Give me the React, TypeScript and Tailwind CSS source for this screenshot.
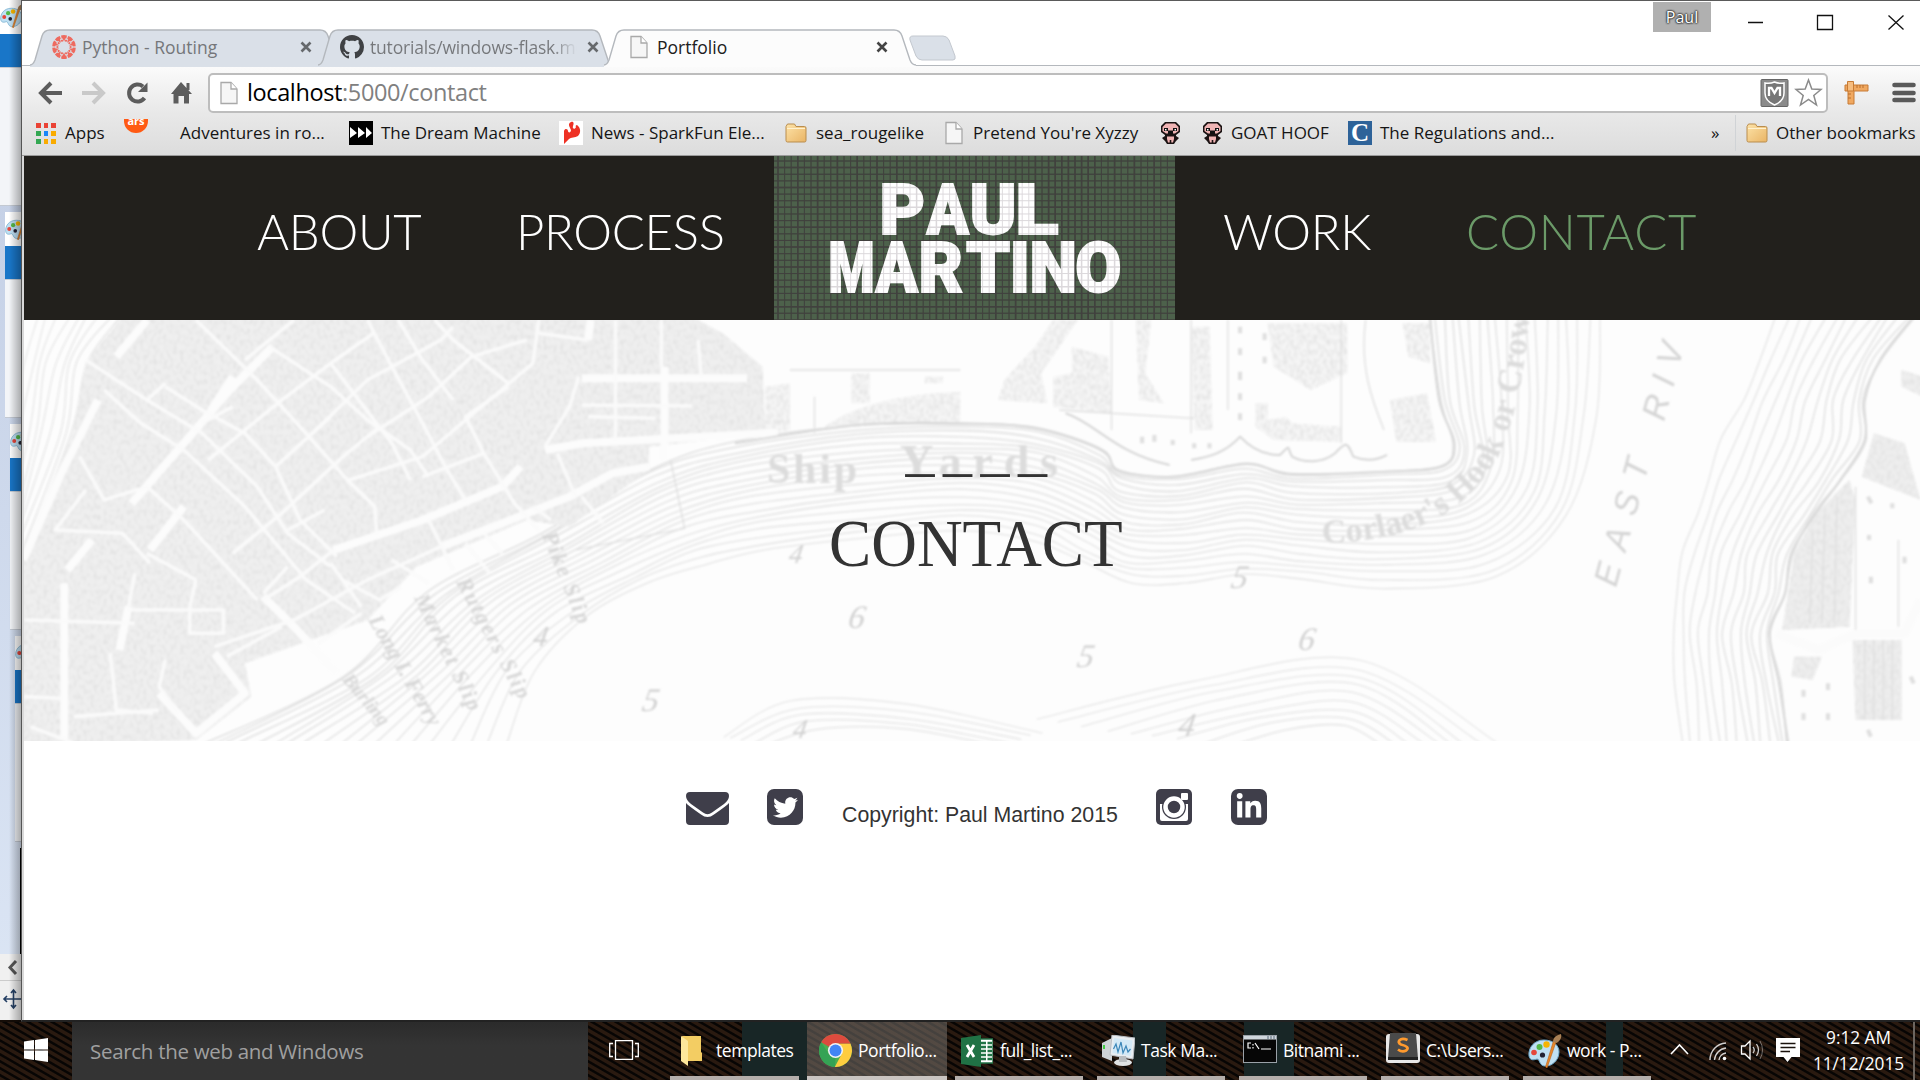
import type { ReactNode } from "react";
import { FaTwitter, FaLinkedinIn } from "react-icons/fa";

type Pt = [number, number];

const smooth = (pts: Pt[]) => {
  let d = `M${pts[0][0].toFixed(1)} ${pts[0][1].toFixed(1)}`;
  for (let i = 0; i < pts.length - 1; i++) {
    const p0 = pts[Math.max(0, i - 1)];
    const p1 = pts[i];
    const p2 = pts[i + 1];
    const p3 = pts[Math.min(pts.length - 1, i + 2)];
    d += `C${(p1[0] + (p2[0] - p0[0]) / 6).toFixed(1)} ${(p1[1] + (p2[1] - p0[1]) / 6).toFixed(1)} ${(p2[0] - (p3[0] - p1[0]) / 6).toFixed(1)} ${(p2[1] - (p3[1] - p1[1]) / 6).toFixed(1)} ${p2[0].toFixed(1)} ${p2[1].toFixed(1)}`;
  }
  return d;
};

/** Depth contours between two shore curves with the same number of points. */
function Contours({ a, b, n, ease = 1, color = "#e2e2e2" }: { a: Pt[]; b: Pt[]; n: number; ease?: number; color?: string }) {
  return (
    <g fill="none" stroke={color} strokeWidth="1.3">
      {Array.from({ length: n }, (_, i) => {
        const t = Math.pow(i / (n - 1), ease);
        const pts = a.map((p, j): Pt => [
          p[0] + (b[j][0] - p[0]) * t + Math.sin(i * 1.7 + j * 2.3) * 3,
          p[1] + (b[j][1] - p[1]) * t + Math.cos(i * 1.3 + j * 1.9) * 4,
        ]);
        return <path key={i} d={smooth(pts)} vectorEffect="non-scaling-stroke" opacity={1 - t * 0.3} />;
      })}
    </g>
  );
}

const yardIn: Pt[] = [[330, 1330], [560, 1130], [700, 880], [880, 700], [1060, 510], [1200, 430], [1400, 375], [1568, 370], [1690, 385], [1798, 450], [1828, 512], [1920, 530], [2035, 492], [2110, 522], [2260, 515], [2355, 500], [2375, 430], [2350, 300], [2335, 50]];
const yardOut: Pt[] = [[830, 1330], [870, 1110], [960, 950], [1060, 850], [1150, 790], [1250, 750], [1400, 720], [1568, 690], [1690, 720], [1768, 790], [1850, 850], [1940, 845], [2030, 825], [2130, 840], [2260, 862], [2440, 830], [2560, 650], [2605, 350], [2612, 50]];
const eastIn: Pt[] = [[3125, 50], [3070, 180], [3045, 300], [3045, 420], [3005, 540], [2965, 640], [2925, 760], [2915, 880], [2890, 1000], [2905, 1150], [2920, 1330]];
const eastOut: Pt[] = [[2900, 50], [2875, 180], [2845, 300], [2812, 420], [2790, 540], [2770, 640], [2750, 760], [2737, 880], [2732, 1000], [2737, 1150], [2745, 1330]];
const shoalIn: Pt[] = [[2000, 1340], [2100, 1290], [2200, 1280], [2260, 1340]];
const shoalOut: Pt[] = [[1690, 1260], [1950, 1140], [2220, 1080], [2440, 1330]];
const westIn: Pt[] = [[195, 50], [140, 190], [120, 400], [38, 760]];
const westOut: Pt[] = [[60, 50], [40, 190], [20, 400], [0, 700]];
const smallIn: Pt[] = [[1240, 1340], [1330, 1290], [1480, 1290], [1640, 1340]];
const smallOut: Pt[] = [[1180, 1310], [1290, 1200], [1480, 1215], [1700, 1300]];

const wideStreets = [
  "M445 140L370 280L300 430L215 610M380 230L345 330",
  "M160 300L100 520L38 780",
  "M850 500L820 560L690 660L545 750M110 810L150 720",
  "M1060 500L1000 520L930 590L820 670L720 740",
  "M105 850L105 1320M210 920L195 1050",
  "M240 60L190 170M430 890L480 980L550 1120",
  "M350 1060L400 1180L320 1300L260 1180",
  "M1085 200L1085 480M950 235L1220 235M890 450L950 430L1270 398",
  "M965 60L960 120M300 620L245 750",
];
const narrowStreets = [
  "M140 180L240 300L330 400L420 560L470 700L540 800",
  "M170 270L230 370L300 450L400 620L500 840L580 940",
  "M270 260L330 330L400 400L450 500L490 660L550 770",
  "M320 60L420 240L480 360L570 545L612 620L615 700",
  "M440 140L540 260L600 360L670 450L700 530",
  "M600 60L640 200L690 370L730 510L760 600",
  "M650 60L690 180L740 300M710 60L740 120L830 250",
  "M740 80L720 120L600 240L510 400",
  "M880 60L870 190L780 330L690 470L570 540",
  "M610 100L540 190L460 300L340 480",
  "M480 60L400 180M860 120L770 170L700 290L600 410",
  "M830 260L760 350L790 460L840 610L880 690",
  "M240 300L270 250M330 370L380 320M450 500L540 350",
  "M540 190L640 430L670 540M690 530L790 460",
  "M700 660L740 810M760 730L800 820M790 700L820 760M640 780L700 850",
  "M910 460L940 590M950 590L985 670M870 620L900 660",
  "M1005 60L1005 420M1080 60V200M1140 120L1145 230M950 315L1130 318M960 350L1070 355M945 230L930 320L890 440",
  "M130 470L170 600L240 560L300 660L370 800L420 900",
  "M40 960L220 970M210 930L365 930L365 1000L310 1000L310 920",
  "M270 1080L260 1160L290 1240M240 760L320 840M470 690L530 630M545 750L490 830L430 900",
  "M720 740L600 840L480 960L350 1040",
  "M540 790L590 920M560 840L620 900L655 860M470 800L430 880M880 100L960 120",
  "M620 380L560 470L460 640L380 760M140 570L90 690L200 700L245 790",
  "M40 1190L100 1195M120 1250L260 1230M180 1060L190 1230L250 1240M50 1280L120 1330",
  "M220 820L210 920M320 840L310 920M370 1070L460 980M520 1030L590 940",
];

function SoundingMap() {
  return (
    <svg className="absolute inset-0 h-full w-full overflow-hidden" viewBox="0 0 1896 421" preserveAspectRatio="none" aria-hidden="true">
      <defs>
        <filter id="grain" x="0" y="0" width="100%" height="100%">
          <feTurbulence type="fractalNoise" baseFrequency="0.3 0.2" numOctaves="2" seed="7" result="n" />
          <feColorMatrix in="n" type="matrix" values="0 0 0 0 0.76  0 0 0 0 0.76  0 0 0 0 0.76  2.4 0 0 0 -0.95" result="g" />
          <feComposite in="g" in2="SourceGraphic" operator="in" result="c" />
          <feMerge>
            <feMergeNode in="SourceGraphic" />
            <feMergeNode in="c" />
          </feMerge>
        </filter>
        <filter id="soft">
          <feGaussianBlur stdDeviation="0.8" />
        </filter>
        <path id="hook" d="M1298 223C1385 222 1445 195 1477 130C1494 88 1505 40 1508 -60" />
      </defs>
      <rect width="1896" height="421" fill="#fdfdfd" />
      <g filter="url(#soft)">
        <g transform="translate(-24 -20) scale(0.6124 0.3333)">
          <Contours a={yardIn} b={yardOut} n={19} ease={1.15} color="#dcdcdc" />
          <Contours a={eastIn} b={eastOut} n={14} ease={1.2} color="#dadada" />
          <Contours a={shoalIn} b={shoalOut} n={9} />
          <Contours a={smallIn} b={smallOut} n={5} />
          <Contours a={westIn} b={westOut} n={9} />
        </g>
        <g filter="url(#grain)">
          <g transform="translate(-24 -20) scale(0.6124 0.3333)">
            <path d="M200 50L140 185L120 400L36 760L36 1340L320 1320L410 1190L400 1090L600 960L680 800L860 660L930 680L1060 510L1060 440L1250 400L1245 200L1180 100L1130 50Z" fill="#f0f0f0" />
            <path d="M1250 260L1290 250L1290 390L1250 400ZM1390 220L1420 220L1420 310L1390 310ZM1510 230L1540 230L1540 250L1510 250ZM1640 240L1690 140L1720 60L1760 60L1730 140L1700 220L1710 310L1630 300ZM1720 230L1750 220L1750 140L1810 170L1815 340L1720 320ZM1855 60L1880 60L1870 220L1900 310L1860 300ZM1945 80L1975 80L1980 390L1950 390ZM2070 70L2200 70L2200 220L2140 270L2080 200ZM2050 310L2070 310L2070 360L2100 350L2110 370L2190 380L2190 425L2080 420L2050 380ZM2270 300L2330 280L2345 425L2280 425ZM2290 70L2335 70L2335 190L2300 170Z" fill="#f5f5f5" />
            <path d="M3020 540L3030 600L3020 980L2910 990L2930 760L2965 640ZM3060 400L3110 430L3136 600L3040 530ZM3025 1020L3105 1020L3105 1260L3030 1260ZM3105 210L3140 230L3140 290L3105 260ZM2930 1070L2975 1070L2960 1140L2925 1130Z" fill="#eeeeee" />
            <path d="M1340 390C1400 300 1500 280 1568 275L1568 370C1480 360 1400 380 1340 390Z" fill="#f5f5f5" />
          </g>
        </g>
        <g transform="translate(-24 -20) scale(0.6124 0.3333)" fill="none" strokeLinejoin="round">
          <g stroke="#fcfcfc" strokeWidth="8">
            {wideStreets.map((d) => <path key={d} d={d} vectorEffect="non-scaling-stroke" />)}
          </g>
          <g stroke="#fafafa" strokeWidth="3.6">
            {narrowStreets.map((d) => <path key={d} d={d} vectorEffect="non-scaling-stroke" />)}
          </g>
          <path d="M2900 1000L2970 1050L3030 1000L3110 1000L3136 900" stroke="#fbfbfb" strokeWidth="9" vectorEffect="non-scaling-stroke" />
          <g stroke="#d6d6d6" strokeWidth="2">
            <path d={smooth(yardIn.slice(5))} vectorEffect="non-scaling-stroke" />
            <path d={smooth(eastIn)} vectorEffect="non-scaling-stroke" />
            <path d="M1945 480C1975 470 2000 460 2025 410C2040 440 2060 465 2090 465C2110 430 2100 440 2110 470C2130 490 2160 490 2180 460C2200 420 2200 430 2210 470C2230 485 2250 480 2265 465" vectorEffect="non-scaling-stroke" />
            <path d="M1740 340C1790 370 1820 460 1910 495" vectorEffect="non-scaling-stroke" />
          </g>
          <g stroke="#dedede" strokeWidth="1.3">
            <path d="M1945 60L1945 400M1815 60L1815 390M1730 330L1950 355M1290 210L1568 210M1330 290L1330 400M1095 480L1118 685L940 750M2005 60L2005 330M2190 60L2190 430M2230 60C2220 200 2240 300 2260 390M3030 560L3030 990M3100 720L3100 980M3045 1020L3045 1260M3060 1020L3060 1260M3075 1020L3075 1260M3090 1020L3090 1260M2960 700L2955 970M2980 640L2975 970M3000 590L2995 970" vectorEffect="non-scaling-stroke" />
            <path d="M3050 590L3056 610M3090 610L3090 625M3052 705L3052 720M3110 770L3110 790M3055 830L3055 850M3050 1290L3055 1310M2945 1170L2945 1190M2985 1150L2985 1170M2945 1240L2945 1260M2985 1240L2985 1260M3120 1130L3125 1150" strokeWidth="4" vectorEffect="non-scaling-stroke" />
            <path d="M2025 80V100M2025 145V165M2025 215V240M2025 280V300M2025 340V360M2065 100V120M2065 170V190M1865 410V430M1885 405V425M1915 420V435M1950 430V445M1975 430V445" strokeWidth="4" vectorEffect="non-scaling-stroke" />
          </g>
        </g>
        <g fill="#dcdcdc" className="font-['Liberation_Serif',serif] font-bold">
          <text x="743" y="163" fontSize="42" textLength="90">Ship</text>
          <text x="876" y="157" fontSize="46" textLength="158">Yards</text>
          <text fontSize="34">
            <textPath href="#hook" textLength="352">Corlaer's Hook or Crow</textPath>
          </text>
        </g>
        <g fill="#d4d4d4" className="font-['Liberation_Sans',sans-serif] italic">
          <text transform="translate(1592 268) rotate(-75)" fontSize="34" letterSpacing="14">EAST</text>
          <text transform="translate(1640 102) rotate(-75)" fontSize="34" letterSpacing="11">RIV</text>
        </g>
        <g fill="#d0d0d0" fontSize="33" className="font-['Liberation_Serif',serif] italic">
          <text transform="translate(823 308) skewX(-10)">6</text>
          <text transform="translate(617 391) skewX(-10)">5</text>
          <text transform="translate(508 326) skewX(-10)" fontSize="29">4</text>
          <text transform="translate(764 243) skewX(-10)" fontSize="27">4</text>
          <text transform="translate(768 418) skewX(-10)" fontSize="27">4</text>
          <text transform="translate(1206 268) skewX(-10)">5</text>
          <text transform="translate(1273 330) skewX(-10)">6</text>
          <text transform="translate(1052 347) skewX(-10)">5</text>
          <text transform="translate(1153 416) skewX(-10)">4</text>
        </g>
        <g fill="#d6d6d6" fontSize="22" className="font-['Liberation_Serif',serif] font-bold italic">
          <text transform="translate(518 215) rotate(68)" letterSpacing="2">Pike Slip</text>
          <text transform="translate(432 262) rotate(62)" letterSpacing="2">Rutgers Slip</text>
          <text transform="translate(390 278) rotate(64)" letterSpacing="2">Market Slip</text>
          <text transform="translate(344 300) rotate(60)" letterSpacing="0">Long I. Ferry</text>
          <text transform="translate(318 360) rotate(50)" fontSize="19">Burling</text>
        </g>
      </g>
    </svg>
  );
}

type Glyph = [string, number, number];
const paul: Glyph[] = [["P", 108, 40], ["A", 153, 40], ["U", 198, 41], ["L", 244, 40]];
const martino: Glyph[] = [["M", 56, 41], ["A", 102, 40], ["R", 147, 40], ["T", 193, 41], ["I", 238, 15], ["N", 258, 41], ["O", 303, 41]];
/** Advance width and left bearing of each letter at 68px, used to fit it to its cell. */
const metrics: Record<string, [number, number]> = {
  P: [40.5, 2.5], A: [46, 0.3], U: [41, 2.5], L: [35.5, 2.5], M: [55, 2.5], R: [41.500, 2.5], T: [41.500, 1], I: [16, 2.5], N: [43, 2.5], O: [43.500, 1.8],
};

function Word({ glyphs, y }: { glyphs: Glyph[]; y: number }) {
  return (
    <>
      {glyphs.map(([ch, x, w]) => (
        <text key={ch + x} transform={`translate(${x} ${y}) scale(${w / metrics[ch][0]} 1)`} x={-metrics[ch][1]}>{ch}</text>
      ))}
    </>
  );
}

function Logo() {
  const cols = Array.from({ length: 60 }, (_, i) => i * 6.6 + 4);
  const rows = Array.from({ length: 25 }, (_, i) => i * 6.62 + 5);
  const grid = (c: string, o: number) => (
    <g stroke={c} opacity={o}>
      {cols.map((x, i) => <path key={`c${i}`} d={`M${x} 0V164`} strokeWidth={i % 3 === 0 || (i > 40 && i < 48) ? 1.5 : 0.9} />)}
      {rows.map((y, i) => <path key={`r${i}`} d={`M0 ${y}H401`} strokeWidth={i % 3 === 1 ? 1.5 : 1} />)}
    </g>
  );
  return (
    <svg width="401" height="164" viewBox="0 0 401 164" className="shrink-0 bg-[#4d614b]">
      {grid("#20231c", 0.95)}
      <g fill="#fff" stroke="#fff" strokeWidth="2" fontSize="71" className="font-['Roboto',sans-serif] font-black">
        <Word glyphs={paul} y={78} />
        <Word glyphs={martino} y={136} />
      </g>
      {grid("#8a7f8a", 0.3)}
    </svg>
  );
}

const PageIcon = () => (
  <svg width="18" height="24" viewBox="0 0 18 24" className="shrink-0">
    <path d="M1 1.5H11L17 8V22.5H1Z" fill="#f6f6f6" stroke="#a9a9a9" strokeWidth="1.3" />
    <path d="M11 1.5V8H17" fill="#fff" stroke="#a9a9a9" strokeWidth="1.3" />
  </svg>
);

const Folder = () => (
  <svg width="22" height="20" viewBox="0 0 22 20" className="shrink-0">
    <defs>
      <linearGradient id="fold" x1="0" y1="0" x2="1" y2="1">
        <stop offset="0" stopColor="#fde3a8" />
        <stop offset="1" stopColor="#e9b465" />
      </linearGradient>
    </defs>
    <path d="M1 3.5L2.5 1H9.500L11 3.500H19.500Q21 3.500 21 5V17.500Q21 19 19.500 19H2.500Q1 19 1 17.500Z" fill="url(#fold)" stroke="#b98d4f" />
    <path d="M2 5.500H20" stroke="#fff1cf" />
  </svg>
);

const Isaac = () => (
  <svg width="19" height="22" viewBox="0 0 19 22" className="shrink-0">
    <path d="M4 0H15L19 4V10L15 13V14L18 16L15 19L13 22H6L4 19L1 16L4 14V13L0 10V4Z" fill="#1a1212" />
    <path d="M5 1.500H14L17.500 5V9L14 11.500H5L1.500 9V5Z" fill="#efb3b3" />
    <path d="M3 6H7V9H3ZM12 6H16V9H12ZM7 8.500H12V12H7Z" fill="#111" />
    <path d="M4 7H5.500V8.500H4ZM13.500 7H15V8.500H13.500Z" fill="#fff" />
    <path d="M6 14.500H13V17L12 20.500H10.300V18H8.700V20.500H7L6 17Z" fill="#efb3b3" />
  </svg>
);

const Palette = ({ size = 34 }: { size?: number }) => (
  <svg width={size} height={size} viewBox="0 0 34 34" className="shrink-0">
    <path d="M16 6C6 6 0 14 1 22C2 27 6 26 9 25C12 25 11 31 16 32C24 33 31 26 31 18C31 11 25 6 16 6Z" fill="#bfe0f3" stroke="#6fa9cb" />
    <circle cx="6" cy="18.500" r="2.800" fill="#e5473c" />
    <circle cx="11.500" cy="13" r="3" fill="#54b848" />
    <circle cx="18.500" cy="10.500" r="3.200" fill="#f5b400" />
    <circle cx="14.500" cy="21" r="2.600" fill="#223" />
    <path d="M28 8L19 34L17.500 33L25.500 7Z" fill="#e8892c" stroke="#b8601a" strokeWidth=".6" />
    <path d="M25 8C25 3 29 1 33 0C34 4 32 7 28.500 9Z" fill="#a98055" />
  </svg>
);

const CloseX = ({ color }: { color: string }) => (
  <svg width="12" height="12" viewBox="0 0 12 12" className="shrink-0">
    <path d="M1.500 1.500L10.500 10.500M10.500 1.500L1.500 10.500" stroke={color} strokeWidth="2.600" />
  </svg>
);

const petals = Array.from({ length: 10 }, (_, i) => i * 36);

function Tab({ width, active, children }: { width: number; active?: boolean; children: ReactNode }) {
  const w = width;
  return (
    <div className="relative h-9 shrink-0" style={{ width: w, zIndex: active ? 2 : 1 }}>
      <svg className="absolute left-0 top-0" width={w} height="38" viewBox={`0 0 ${w} 38`}>
        <path
          d={`M0 36Q3 36 5 31L12 7Q14 1 20 1H${w - 22}Q${w - 16} 1 ${w - 14} 7L${w - 6} 31Q${w - 4} 36 ${w} 36V38H0Z`}
          fill={active ? "#fcfcfc" : "#dae0e8"}
        />
        <path
          d={`M0 36Q3 36 5 31L12 7Q14 1 20 1H${w - 22}Q${w - 16} 1 ${w - 14} 7L${w - 6} 31Q${w - 4} 36 ${w} 36`}
          fill="none"
          stroke="#b4b8bd"
          strokeWidth="1.400"
        />
      </svg>
      <div className="relative flex h-full items-center">{children}</div>
    </div>
  );
}

function TabStrip() {
  return (
    <div className="flex h-[65px] shrink-0 items-start border-t border-[#5a5a5a] bg-white pl-2">
      <div className="flex h-full items-end">
        <Tab width={312}>
          <svg width="24" height="24" viewBox="0 0 24 24" className="ml-[22px] shrink-0">
            {petals.map((a) => (
              <path key={a} transform={`rotate(${a} 12 12)`} d="M9 .6Q12 -.4 15 .6L14.300 3.500H13.300L12 6.800L10.700 3.500H9.700Z" fill="#ee6a5f" />
            ))}
            {petals.map((a) => (
              <circle key={`d${a}`} transform={`rotate(${a + 18} 12 12)`} cx="12" cy="5.400" r="1.100" fill="#ee6a5f" />
            ))}
          </svg>
          <span className="ml-[6px] whitespace-nowrap text-[17.500px] text-[#75777a]">Python - Routing</span>
          <span className="ml-auto mr-[30px]"><CloseX color="#66696c" /></span>
        </Tab>
        <div className="-ml-[24px]">
          <Tab width={296}>
            <svg width="24" height="24" viewBox="0 0 16 16" className="ml-[22px] shrink-0">
              <path fill="#3f4144" d="M8 0C3.580 0 0 3.580 0 8c0 3.540 2.290 6.530 5.470 7.590.4.070.55-.17.55-.38 0-.19-.01-.82-.01-1.490-2.010.37-2.530-.49-2.690-.94-.09-.23-.48-.94-.82-1.130-.28-.15-.68-.52-.01-.53.63-.01 1.080.58 1.230.82.72 1.210 1.870.87 2.330.66.07-.52.28-.87.51-1.070-1.780-.2-3.640-.89-3.640-3.950 0-.87.31-1.590.82-2.150-.08-.2-.36-1.020.08-2.120 0 0 .67-.21 2.200.82.64-.18 1.320-.27 2-.27s1.360.09 2 .27c1.530-1.040 2.200-.82 2.200-.82.44 1.100.16 1.920.08 2.120.51.56.82 1.270.82 2.150 0 3.070-1.870 3.750-3.650 3.950.29.25.54.73.54 1.480 0 1.070-.01 1.930-.01 2.200 0 .21.15.46.55.38A8.010 8.010 0 0 0 16 8c0-4.420-3.580-8-8-8z" />
            </svg>
            <span className="ml-[6px] w-[207px] overflow-hidden whitespace-nowrap bg-gradient-to-r from-[#75777a] from-88% to-transparent bg-clip-text text-[17.500px] tracking-[-0.180px] text-transparent">tutorials/windows-flask.md</span>
            <span className="ml-[10px]"><CloseX color="#66696c" /></span>
          </Tab>
        </div>
        <div className="relative z-10 -ml-[10px]">
          <Tab width={312} active>
            <span className="ml-[26px]"><PageIcon /></span>
            <span className="ml-[9px] text-[17.500px] text-[#202020]">Portfolio</span>
            <span className="ml-auto mr-[28px]"><CloseX color="#444" /></span>
          </Tab>
        </div>
        <svg width="50" height="28" viewBox="0 0 50 28" className="-ml-2 mb-[3px] shrink-0">
          <path d="M5 2H35Q39 2 41 6L47 22Q48 26 45 26H14Q10 26 8 22L2 6Q1 2 5 2Z" fill="#dae0e8" stroke="#c3c8cf" />
        </svg>
      </div>
      <div className="ml-auto flex h-full items-start">
        <div className="mt-[1px] flex h-[30px] w-[58px] items-center justify-center bg-[#b0b0b0] text-[16px] text-white [text-shadow:0_0_2px_#222,0_0_2px_#222,0_0_2px_#222]">Paul</div>
        <svg width="209" height="44" viewBox="-2 0 209 44" fill="none" stroke="#111" strokeWidth="1.300">
          <path d="M35 21.500H50M104.500 14.500H119.500V28.500H104.500ZM175.500 14.500L190.500 28.500M190.500 14.500L175.500 28.500" />
        </svg>
      </div>
    </div>
  );
}

function Toolbar() {
  return (
    <div className="flex h-[47px] shrink-0 items-center pt-[6px]">
      <svg width="186" height="40" viewBox="22 73 186 40" fill="none" stroke="#5c5c5c" strokeWidth="4" className="shrink-0">
        <path d="M62 93H42M51 83L41 93L51 103" />
        <path d="M82 93H102M93 83L103 93L93 103" stroke="#c9c9c9" />
        <path d="M144.500 98A8.500 8.500 0 1 1 143 86.500" />
        <path d="M147.500 82.500V92H138Z" fill="#5c5c5c" stroke="none" />
        <path d="M181 82L192 94H189V103.500H184V96H178.500V103.500H173.500V94H171L181 82ZM186.500 83H189.500V90H186.500Z" fill="#5c5c5c" stroke="none" />
      </svg>
      <div className="flex h-[40px] w-[1620px] shrink-0 items-center rounded-[5px] border-2 border-[#bdbdbd] bg-white pl-[10px]">
        <PageIcon />
        <div className="ml-[9px] text-[23.500px] tracking-[-0.380px] text-[#808080]"><span className="text-black">localhost</span>:5000/contact</div>
        <svg width="64" height="30" viewBox="0 0 64 30" className="ml-auto mr-[2px]">
          <rect x="1" y="1.500" width="27" height="27" rx="1" fill="#8a8a8a" stroke="#666" />
          <path d="M5 5Q10 6 14.500 4Q19 6 24 5V15Q24 23 14.500 27Q5 23 5 15Z" fill="#777" stroke="#fff" strokeWidth="1.500" />
          <path d="M9 18V10H11.500L14.500 15L17.500 10H20V18" fill="none" stroke="#fff" strokeWidth="2.300" />
          <path d="M48.500 2L51.800 11L61 11.500L53.800 17.500L56.500 27L48.500 21.500L40.500 27L43.200 17.500L36 11.500L45.200 11Z" fill="#fff" stroke="#8b8b8b" strokeWidth="1.500" />
        </svg>
      </div>
      <svg width="92" height="40" viewBox="1828 73 92 40" className="shrink-0">
        <path d="M1845 85H1868V91H1854V104H1848V91H1845Z" fill="#f0a860" stroke="#c77b35" />
        <path d="M1847.500 81.500H1853.500V91H1847.500Z" fill="#f6bd7f" stroke="#c77b35" />
        <path d="M1857 85V88M1860 85V88M1863 85V88M1848 94H1851M1848 98H1851" stroke="#b86f2c" />
        <path d="M1894.500 85H1913.500M1894.500 93H1913.500M1894.500 100H1913.500" stroke="#5a5a5a" strokeWidth="4.600" strokeLinecap="round" />
      </svg>
    </div>
  );
}

function Mark({ w, gap = "gap-2", icon, label }: { w: string; gap?: string; icon?: ReactNode; label?: string }) {
  return (
    <div className={`flex h-full shrink-0 items-center whitespace-nowrap ${gap} ${w}`}>
      {icon}
      {label && <span>{label}</span>}
    </div>
  );
}

const appColors = ["#ea4335", "#ea4335", "#ea4335", "#34a853", "#1a86f8", "#f9ab00", "#34a853", "#f9ab00", "#f9ab00"];

function Bookmarks() {
  return (
    <div className="flex h-[43px] shrink-0 items-center border-b border-[#9a9a9a] pb-[2px] pl-[14px] text-[17px] text-[#151515]">
      <Mark w="w-[88px]" gap="gap-[9px]" label="Apps" icon={
        <div className="grid w-5 grid-cols-3 gap-[3px]">
          {appColors.map((c, i) => <i key={i} className="h-[5px]" style={{ background: c }} />)}
        </div>
      } />
      <Mark w="w-[56px]" icon={
        <div className="mb-[14px] flex h-[14px] w-6 justify-center overflow-hidden rounded-b-full bg-[#ff5a13] text-[11px] font-bold leading-[3px] text-white">ars</div>
      } />
      <Mark w="w-[169px]" label="Adventures in ro..." />
      <Mark w="w-[210px]" label="The Dream Machine" icon={
        <svg width="24" height="24" viewBox="0 0 24 24"><path d="M0 0H24V24H0Z" /><path d="M1 6L8 12L1 17ZM9 6L16 12L9 17ZM17 6L23 12L17 17Z" fill="#fff" /></svg>
      } />
      <Mark w="w-[226px]" label="News - SparkFun Ele..." icon={
        <svg width="24" height="24" viewBox="0 0 24 24"><path d="M0 0H24V24H0Z" fill="#fff" /><path d="M12 1C15 0 15 3 14 5C13 8 16 9 17 6C16 5 17 4 18 4C22 7 22 12 19 15C16 17 12 16 10 18L5 23V10C6 7 9 8 9 10C9 12 12 12 12 9C11 6 8 3 12 1Z" fill="#ee3124" /></svg>
      } />
      <Mark w="w-[160px]" gap="gap-[9px]" label="sea_rougelike" icon={<Folder />} />
      <Mark w="w-[216px]" gap="gap-[10px]" label="Pretend You're Xyzzy" icon={<PageIcon />} />
      <Mark w="w-[42px]" icon={<Isaac />} />
      <Mark w="w-[145px]" gap="gap-[9px]" label="GOAT HOOF" icon={<Isaac />} />
      <Mark w="w-[363px]" label="The Regulations and..." icon={
        <div className="flex size-6 items-center justify-center bg-[#2e6399] font-['Liberation_Serif',serif] text-[25px] font-bold text-white">C</div>
      } />
      <Mark w="w-[24px]" label="»" />
      <div className="mr-[10px] h-9 w-px bg-[#d0d3d6]" />
      <Mark w="w-[172px]" gap="gap-[8px]" label="Other bookmarks" icon={<Folder />} />
    </div>
  );
}

function Site() {
  return (
    <div className="flex flex-1 flex-col border-l-2 border-[#d9d9d9] bg-white">
      <nav className="flex h-[164px] shrink-0 items-center bg-[#22201c] font-['Lato',sans-serif] text-[49px] font-light tracking-[-0.300px] text-white">
        <div className="flex w-[750px] shrink-0 pb-[13px]">
          <a className="ml-[233px] w-[259px]">ABOUT</a>
          <a>PROCESS</a>
        </div>
        <Logo />
        <div className="flex pb-[13px]">
          <a className="ml-[48px] w-[243px]">WORK</a>
          <a className="tracking-[0.700px] text-[#6b9a68]">CONTACT</a>
        </div>
      </nav>
      <section className="relative h-[421px] shrink-0">
        <SoundingMap />
        <div className="relative flex flex-col items-center pl-[8px] font-['Liberation_Serif',serif] text-[#333]">
          <div className="mt-[100px] h-[59px] pl-[9px] text-[58px] leading-[62px] tracking-[8.500px]">____</div>
          <h1 className="mt-[24px] origin-center scale-x-[0.930] text-[68px] leading-[80px]">CONTACT</h1>
        </div>
      </section>
      <footer className="mt-[44px] flex h-[45px] pl-[662px] text-[#3f3e4a]">
        <svg width="43" height="40" viewBox="0 0 43 40" fill="currentColor" className="mt-[1px]">
          <path d="M4 6H39Q43 6 43 10Q43 14 38 18L26 26.500Q21.500 30 17 26.500L5 18Q0 14 0 10Q0 6 4 6Z" />
          <path d="M0 17Q2 19.500 15 28.500Q21.500 33.500 28 28.500Q41 19.500 43 17V35Q43 39 39 39H4Q0 39 0 35Z" />
        </svg>
        <div className="ml-[38px] mt-1 flex size-9 items-center justify-center rounded-[7px] bg-[#3f3e4a] text-white">
          <FaTwitter className="size-[25px]" />
        </div>
        <span className="ml-[39px] mt-[17px] w-[276px] whitespace-nowrap font-['Liberation_Sans',sans-serif] text-[21.300px] leading-[26px] text-[#333]">Copyright: Paul Martino 2015</span>
        <svg width="36" height="36" viewBox="0 0 36 36" className="ml-[38px] mt-1">
          <rect width="36" height="36" rx="5" fill="currentColor" />
          <path d="M4 15H8.500M27.500 15H32V30Q32 32 30 32H6Q4 32 4 30V15" fill="#fff" />
          <circle cx="18" cy="18" r="12" fill="currentColor" />
          <circle cx="18" cy="18" r="8.500" fill="none" stroke="#fff" strokeWidth="4.500" />
          <rect x="25" y="4" width="7" height="7" rx="1" fill="#fff" />
        </svg>
        <div className="ml-[39px] mt-1 flex size-9 items-center justify-center rounded-[7px] bg-[#3f3e4a] text-white">
          <FaLinkedinIn className="size-[28px]" />
        </div>
      </footer>
    </div>
  );
}

function BackWindow({ inset, first }: { inset: string; first?: boolean }) {
  return (
    <div className={`${inset} flex h-[206px] shrink-0 flex-col overflow-hidden border-b border-[#c3c9d2] bg-[#f3f5f8] ${first ? "" : "mt-[6px]"}`}>
      <div className="h-[34px] shrink-0 overflow-hidden bg-white pt-[4px]"><Palette size={24} /></div>
      <div className="h-[34px] shrink-0 border-b border-[#c9ced6] bg-[#1976c8]" />
    </div>
  );
}

function BehindStrip() {
  return (
    <div className="relative flex w-[21px] shrink-0 flex-col overflow-hidden bg-gradient-to-b from-[#c0cce3] to-[#dce6f5]">
      <BackWindow inset="ml-0" first />
      <BackWindow inset="ml-[5px]" />
      <BackWindow inset="ml-[10px]" />
      <BackWindow inset="ml-[15px]" />
      <div className="ml-[20px] mt-[6px] h-[107px] bg-black" />
      <svg width="21" height="66" viewBox="0 0 21 66" className="shrink-0 bg-[#f0f0f0]">
        <path d="M16 7L10 13.500L16 20" fill="none" stroke="#555" strokeWidth="3" />
        <path d="M0 26.500H21" stroke="#ccc" />
        <path d="M4 45H22M13.500 36V54M7 42L4 45L7 48M11 39L13.500 36L16 39M11 51L13.500 54L16 51" fill="none" stroke="#243f63" strokeWidth="1.600" />
      </svg>
      <div className="h-[2px] shrink-0 bg-[#150d08]" />
      <div className="absolute inset-y-0 right-0 w-3 bg-gradient-to-r from-transparent to-black/30" />
    </div>
  );
}

function Task({ cls, bar, icon, label, pad }: { cls: string; bar: string; icon: ReactNode; label: string; pad: string }) {
  return (
    <div className={`flex h-full shrink-0 flex-col ${cls}`}>
      <div className={`flex h-[54px] items-center pt-[3px] ${pad}`}>
        {icon}
        <span className="whitespace-nowrap">{label}</span>
      </div>
      <div className={`h-[4px] ${bar}`} />
    </div>
  );
}

function Taskbar() {
  return (
    <div className="flex h-[58px] shrink-0 bg-[repeating-linear-gradient(30deg,#2a1a10_0px,#2a1a10_2.500px,#070504_3.500px,#070504_5px,#2a1a10_6px)] text-[17.500px] tracking-[-0.450px] text-white">
      <div className="flex w-[72px] items-center justify-center pb-[2px]">
        <svg width="24" height="24" viewBox="0 0 24 24" fill="#fff"><path d="M0 3.500L10 2V11.500H0ZM11 1.900L24 0V11.500H11ZM0 12.500H10V22L0 20.500ZM11 12.500H24V24L11 22.100Z" /></svg>
      </div>
      <div className="flex w-[516px] shrink-0 items-center bg-gradient-to-b from-[#2b2b2b] to-[#343434] to-40% pl-[18px] pt-px text-[20.500px] tracking-[-0.300px] text-[#a0a0a0]">Search the web and Windows</div>
      <div className="flex w-[82px] shrink-0 items-center pb-[2px] pl-[21px]">
        <svg width="30" height="20" viewBox="0 0 30 20" fill="none" stroke="#fff" strokeWidth="1.300"><path d="M6.500 .7H23.500V19.300H6.500ZM4 3.500H.7V16.500H4M26 3.500H29.300V16.500H26" /></svg>
      </div>
      <Task cls="w-[137px] bg-[linear-gradient(90deg,transparent_72px,#182626_72px)]" bar="w-[129px] bg-[#b4aeab]" pad="pl-[11px] gap-[14px]" label="templates" icon={
        <svg width="21" height="31" viewBox="0 0 21 31"><path d="M1 1H20V17L21 18V26H5Z" fill="#f3cd63" /><path d="M0 1L7 6V31L0 26Z" fill="#fde79b" /></svg>
      } />
      <Task cls="w-[148px] bg-[linear-gradient(90deg,rgba(110,105,100,0.600)_140px,transparent_140px)]" bar="w-[140px] bg-[#c9c4c1]" pad="pl-[12px] gap-[6px]" label="Portfolio..." icon={
        <svg width="33" height="33" viewBox="0 0 48 48">
          <circle cx="24" cy="24" r="24" fill="#4caf50" />
          <path d="M24 24L3.200 12A24 24 0 0 1 44.800 12L46 14H24Z" fill="#dd4b3e" />
          <path d="M24 14H45.800A24 24 0 0 1 23 48L33 29Z" fill="#ffcd40" />
          <path d="M3.200 12L15 30L24 34L23 48A24 24 0 0 1 3.200 12Z" fill="#35a355" />
          <circle cx="24" cy="24" r="11" fill="#f3f3f3" />
          <circle cx="24" cy="24" r="8.700" fill="#4285f4" />
        </svg>
      } />
      <Task cls="w-[142px]" bar="w-[128px] bg-[#b4aeab]" pad="pl-[6px] gap-[7px]" label="full_list_..." icon={
        <svg width="32" height="32" viewBox="0 0 32 32"><path d="M18 4H32V28H18Z" fill="#fff" stroke="#207245" strokeWidth="1.500" /><path d="M20 8H25M20 12H25M20 16H25M20 20H25M20 24H25M26.500 8H31M26.500 12H31M26.500 16H31M26.500 20H31M26.500 24H31" stroke="#207245" strokeWidth="2.400" /><path d="M0 3L20 0V32L0 29Z" fill="#207245" /><path d="M6 10L13 22M13 10L6 22" stroke="#fff" strokeWidth="2.800" /></svg>
      } />
      <Task cls="w-[142px] bg-[linear-gradient(90deg,transparent_36px,#182626_36px,#182626_69px,transparent_69px)]" bar="w-[128px] bg-[#b4aeab]" pad="pl-[5px] gap-[6px]" label="Task Ma..." icon={
        <svg width="33" height="31" viewBox="0 0 33 31"><path d="M0 8L10 3V26L0 22Z" fill="#cfd3d6" /><path d="M1 10H3V14H1Z" fill="#4c4" /><path d="M10 0L33 3L31 24L8 20Z" fill="#e9edf0" stroke="#b8bdc2" /><path d="M12 3L30.500 5.500L29 21L10.500 18Z" fill="#d3e9f6" /><path d="M11.500 14L14 9L16 17L19 7L21 18L24 11L26 17L28.500 14" fill="none" stroke="#3b86b8" strokeWidth="1.200" /><ellipse cx="21" cy="27.500" rx="9" ry="3.500" fill="#dfe2e4" /><path d="M17 21H24L25 27H17Z" fill="#b9bdc0" /></svg>
      } />
      <Task cls="w-[142px] bg-[linear-gradient(90deg,transparent_5px,#182626_5px,#182626_55px,transparent_55px)]" bar="w-[128px] bg-[#b4aeab]" pad="pl-[4px] gap-[6px]" label="Bitnami ..." icon={
        <svg width="34" height="28" viewBox="0 0 34 28" className="-mt-[3px]"><rect x=".5" y=".5" width="33" height="27" fill="#060606" stroke="#9aa1a8" /><path d="M1 1H33V4.500H1Z" fill="#cfd6dc" /><path d="M25 1V4M28 1V4M31 1V4" stroke="#567" /><path d="M8 8H5V13H8M10 9V10.500M10 12V13.500M12 8L16 14M18 14H28" fill="none" stroke="#fff" strokeWidth="1.200" /></svg>
      } />
      <Task cls="w-[142px]" bar="w-[128px] bg-[#b4aeab]" pad="pl-[5px] gap-[6px]" label="C:\Users..." icon={
        <svg width="34" height="30" viewBox="0 0 34 30" className="-mt-[5px]"><rect x="0" y="1" width="34" height="29" rx="3" fill="#e8e8e8" /><path d="M4 0H30L32 26H2Z" fill="#4a4a4a" /><path d="M2 24H32V27H2Z" fill="#222" /><path d="M21.500 7C14 3.500 10 9.500 15 11.500C21 13 23.500 15 20 17.500C17.500 19 14 18 12 16.500" fill="none" stroke="#ff9a2e" strokeWidth="2.800" /></svg>
      } />
      <Task cls="w-[128px] bg-[linear-gradient(90deg,transparent_83px,#182626_83px,#182626_100px,transparent_100px)]" bar="w-[128px] bg-[#b4aeab]" pad="pl-[5px] gap-[5px]" label="work - P..." icon={<Palette />} />
      <svg width="150" height="58" viewBox="1651 1022 150 58" fill="none" stroke="#fff" className="shrink-0">
        <path d="M1671 1054L1679.500 1045L1688 1054" strokeWidth="1.600" />
        <path d="M1710 1060A17 17 0 0 1 1726 1043M1714.500 1060A13 13 0 0 1 1726 1048M1719 1060A8 8 0 0 1 1726 1053" strokeWidth="1.400" opacity=".8" />
        <circle cx="1724.500" cy="1058.500" r="1.800" fill="#fff" stroke="none" />
        <path d="M1741.500 1046H1745L1750 1041V1059L1745 1054H1741.500Z" strokeWidth="1.300" />
        <path d="M1753 1047Q1755.500 1050 1753 1053M1756.500 1044Q1760.500 1050 1756.500 1056" strokeWidth="1.300" opacity=".8" />
        <path d="M1760 1041Q1765 1050 1760 1059" opacity=".4" />
        <path d="M1776 1038H1800V1057H1791.500L1787.500 1062L1783.500 1057H1776Z" fill="#fff" stroke="none" />
        <path d="M1780.500 1043.500H1795.500M1780.500 1047.500H1795.500M1780.500 1051.500H1790" stroke="#1a120c" strokeWidth="1.300" />
      </svg>
      <div className="flex w-[112px] shrink-0 flex-col items-center justify-center pb-px pl-[3px] text-[17.300px] leading-[26px] tracking-[-0.050px]">
        <span>9:12 AM</span>
        <span>11/12/2015</span>
      </div>
      <div className="h-full w-[2px] shrink-0 bg-[#6b655f]" />
    </div>
  );
}

export default function App() {
  return (
    <div className="flex h-[1080px] w-[1920px] flex-col overflow-hidden bg-black font-['Open_Sans','Noto_Sans',sans-serif]">
      <div className="flex h-[1022px] shrink-0">
        <BehindStrip />
        <div className="flex w-[1899px] flex-col border-b-2 border-l border-b-[#222] border-l-[#555] bg-white">
          <TabStrip />
          <div className="flex shrink-0 flex-col border-t border-[#b4b8bd] bg-gradient-to-b from-[#fbfbfb] via-[#e9e9e9] to-[#dcdcdc]">
            <Toolbar />
            <Bookmarks />
          </div>
          <Site />
        </div>
      </div>
      <Taskbar />
    </div>
  );
}
